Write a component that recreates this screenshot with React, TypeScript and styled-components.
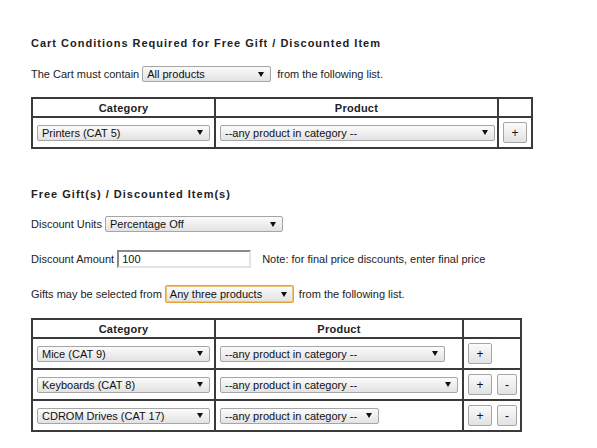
import React from "react";
import styled, { createGlobalStyle } from "styled-components";

const Global = createGlobalStyle`
  html, body { margin: 0; padding: 0; background: #fff; }
  body {
    font-family: "Liberation Sans", Arial, sans-serif;
    font-size: 11px;
    color: #222;
  }
`;

const Page = styled.div`
  padding: 37px 0 0 31px;
`;

const Heading = styled.h3<{ $top?: number }>`
  margin: ${(p) => p.$top ?? 0}px 0 0 0;
  font-size: 11px;
  line-height: 13px;
  font-weight: bold;
  letter-spacing: 1px;
  color: #222;
`;

const FormRow = styled.div<{ $top: number }>`
  display: flex;
  align-items: center;
  height: 18px;
  margin-top: ${(p) => p.$top}px;
  white-space: nowrap;
`;

const Label = styled.span`
  margin-right: 3px;
`;

const After = styled.span<{ $gap?: number }>`
  margin-left: ${(p) => p.$gap ?? 6}px;
`;

const SelectBox = styled.div<{ $w: number; $focus?: boolean }>`
  box-sizing: border-box;
  display: inline-flex;
  align-items: center;
  justify-content: space-between;
  width: ${(p) => p.$w}px;
  height: ${(p) => (p.$focus ? 18 : 16)}px;
  padding: 0 6px 0 4px;
  border: 1px solid ${(p) => (p.$focus ? "#e3a23a" : "#a6a6a6")};
  box-shadow: ${(p) => (p.$focus ? "inset 0 0 0 1px #f2c27a" : "none")};
  border-radius: 2px;
  background: linear-gradient(#fbfbfb, #e2e2e2);
  color: #111;
  font-size: 11px;
  line-height: 14px;
  white-space: nowrap;
  vertical-align: middle;
`;

const Arrow = styled.svg`
  flex: none;
  margin-left: 6px;
`;

const TextInput = styled.div`
  box-sizing: border-box;
  display: inline-flex;
  align-items: center;
  width: 134px;
  height: 18px;
  padding: 0 3px;
  border-top: 2px solid #8a8a8a;
  border-left: 2px solid #8a8a8a;
  border-bottom: 2px solid #e4e4e4;
  border-right: 2px solid #e4e4e4;
  background: #fff;
  color: #111;
`;

const Note = styled.span`
  margin-left: 11px;
`;

const Table = styled.table<{ $w: number; $top: number }>`
  border-collapse: collapse;
  table-layout: fixed;
  width: ${(p) => p.$w}px;
  margin-top: ${(p) => p.$top}px;
  border: 2px solid #3a3a3a;
`;

const Th = styled.th`
  border: 2px solid #3a3a3a;
  height: 15px;
  padding: 1px 4px;
  font-size: 11px;
  font-weight: bold;
  letter-spacing: 0.25px;
  text-align: center;
  color: #222;
`;

const Td = styled.td`
  border: 2px solid #3a3a3a;
  height: 21px;
  padding: 4px 3px 4px 4px;
  vertical-align: middle;
  white-space: nowrap;
`;

const Buttons = styled.div`
  display: flex;
  gap: 5px;
`;

const Btn = styled.button<{ $w: number }>`
  box-sizing: border-box;
  width: ${(p) => p.$w}px;
  height: 21px;
  padding: 0;
  border: 1px solid #a6a6a6;
  border-radius: 2px;
  background: linear-gradient(#fbfbfb, #e2e2e2);
  color: #111;
  font-family: "Liberation Sans", Arial, sans-serif;
  font-size: 12px;
  line-height: 18px;
`;

function Select({ w, text, focus }: { w: number; text: string; focus?: boolean }) {
  return (
    <SelectBox $w={w} $focus={focus}>
      <span>{text}</span>
      <Arrow width="6" height="5" viewBox="0 0 6 5">
        <polygon points="0,0 6,0 3,5" fill="#111" />
      </Arrow>
    </SelectBox>
  );
}

const ANY = "--any product in category --";

export default function App() {
  const gifts = [
    { cat: "Mice (CAT 9)", pw: 225, minus: false },
    { cat: "Keyboards (CAT 8)", pw: 238, minus: true },
    { cat: "CDROM Drives (CAT 17)", pw: 159, minus: true },
  ];
  return (
    <>
      <Global />
      <Page>
        <Heading>Cart Conditions Required for Free Gift / Discounted Item</Heading>
        <FormRow $top={15}>
          <Label>The Cart must contain</Label>
          <Select w={129} text="All products" />
          <After>from the following list.</After>
        </FormRow>
        <Table $w={500} $top={14}>
          <colgroup>
            <col style={{ width: 183 }} />
            <col style={{ width: 283 }} />
            <col style={{ width: 34 }} />
          </colgroup>
          <thead>
            <tr>
              <Th>Category</Th>
              <Th>Product</Th>
              <Th></Th>
            </tr>
          </thead>
          <tbody>
            <tr>
              <Td>
                <Select w={173} text="Printers (CAT 5)" />
              </Td>
              <Td>
                <Select w={275} text={ANY} />
              </Td>
              <Td>
                <Btn $w={24}>+</Btn>
              </Td>
            </tr>
          </tbody>
        </Table>
        <Heading $top={39}>Free Gift(s) / Discounted Item(s)</Heading>
        <FormRow $top={14}>
          <Label>Discount Units</Label>
          <Select w={178} text="Percentage Off" />
        </FormRow>
        <FormRow $top={17}>
          <Label>Discount Amount</Label>
          <TextInput>100</TextInput>
          <Note>Note: for final price discounts, enter final price</Note>
        </FormRow>
        <FormRow $top={17}>
          <Label>Gifts may be selected from</Label>
          <Select w={129} text="Any three products" focus />
          <After $gap={5}>from the following list.</After>
        </FormRow>
        <Table $w={489} $top={15}>
          <colgroup>
            <col style={{ width: 183 }} />
            <col style={{ width: 248 }} />
            <col style={{ width: 58 }} />
          </colgroup>
          <thead>
            <tr>
              <Th>Category</Th>
              <Th>Product</Th>
              <Th></Th>
            </tr>
          </thead>
          <tbody>
            {gifts.map((g) => (
              <tr key={g.cat}>
                <Td>
                  <Select w={173} text={g.cat} />
                </Td>
                <Td>
                  <Select w={g.pw} text={ANY} />
                </Td>
                <Td>
                  <Buttons>
                    <Btn $w={24}>+</Btn>
                    {g.minus && <Btn $w={20}>-</Btn>}
                  </Buttons>
                </Td>
              </tr>
            ))}
          </tbody>
        </Table>
      </Page>
    </>
  );
}
